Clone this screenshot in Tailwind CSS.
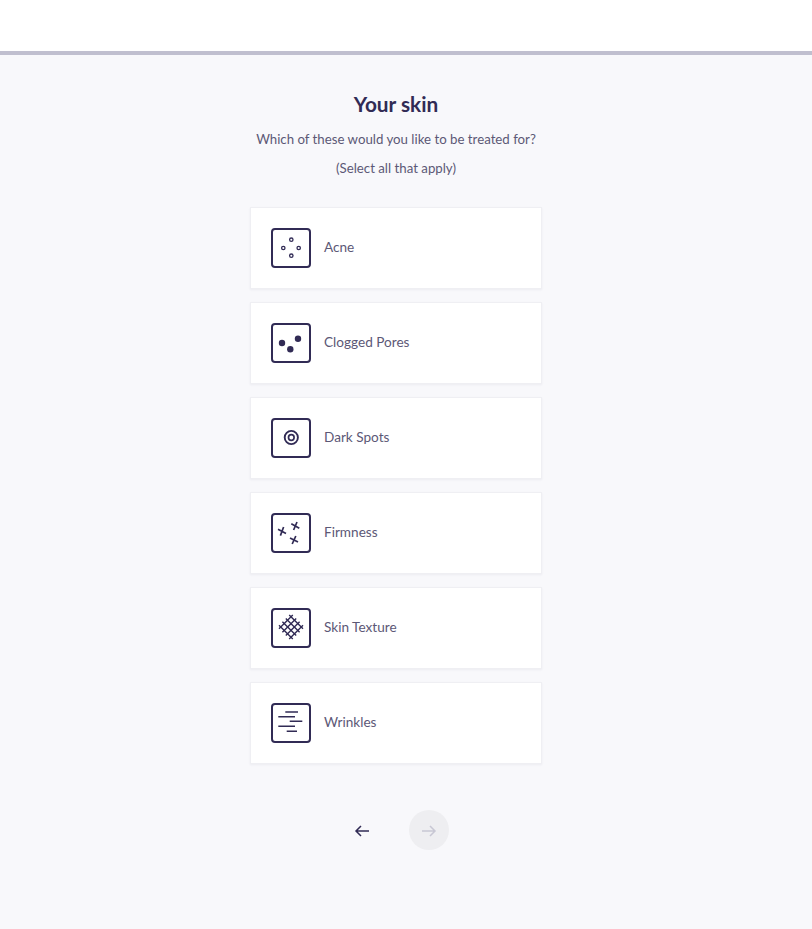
<!doctype html>
<html lang="en">
<head>
<meta charset="utf-8">
<script src="https://cdn.jsdelivr.net/npm/@tailwindcss/browser@4"></script>
<title>Your skin</title>
</head>
<body class="bg-[#f8f8fb] font-['Lato','Liberation_Sans',sans-serif] text-[#312b55]">
<header class="h-[55px] bg-white border-b-4 border-[#c0bfcf]"></header>
<main class="h-[874px] pr-[20px] flex flex-col items-center">
  <h1 class="mt-[36px] h-[26px] leading-[26px] text-[20.8px] font-bold text-[#312b55]">Your skin</h1>
  <p class="mt-[12px] h-[20px] leading-[20px] text-[13.25px] text-[#5c5876]">Which of these would you like to be treated for?</p>
  <p class="mt-[9px] h-[20px] leading-[20px] text-[13.25px] text-[#5c5876]">(Select all that apply)</p>
  <ul class="mt-[29px] w-[292px] flex flex-col gap-[13px]">
    <li class="h-[82px] bg-white border border-[#efeff3] shadow-[0_1px_2px_rgba(49,43,85,0.06)] flex items-center pl-[20px] gap-[13px]">
      <span class="w-[40px] h-[40px] shrink-0 border-2 border-[#312b55] rounded-[4px] block">
        <svg class="-m-[2px]" width="40" height="40" viewBox="0 0 40 40" fill="none" stroke="#312b55" stroke-width="1.3"><circle cx="20.3" cy="11.7" r="1.7"/><circle cx="12.3" cy="20" r="1.7"/><circle cx="27.7" cy="20" r="1.7"/><circle cx="20.3" cy="27.7" r="1.7"/></svg>
      </span>
      <span class="mb-[1px] text-[13.6px] text-[#5c5876]">Acne</span>
    </li>
    <li class="h-[82px] bg-white border border-[#efeff3] shadow-[0_1px_2px_rgba(49,43,85,0.06)] flex items-center pl-[20px] gap-[13px]">
      <span class="w-[40px] h-[40px] shrink-0 border-2 border-[#312b55] rounded-[4px] block">
        <svg class="-m-[2px]" width="40" height="40" viewBox="0 0 40 40" fill="#312b55"><circle cx="11" cy="20" r="3.2"/><circle cx="27" cy="15.7" r="3.2"/><circle cx="19.3" cy="26.3" r="3.2"/></svg>
      </span>
      <span class="mb-[1px] text-[13.6px] text-[#5c5876]">Clogged Pores</span>
    </li>
    <li class="h-[82px] bg-white border border-[#efeff3] shadow-[0_1px_2px_rgba(49,43,85,0.06)] flex items-center pl-[20px] gap-[13px]">
      <span class="w-[40px] h-[40px] shrink-0 border-2 border-[#312b55] rounded-[4px] block">
        <svg class="-m-[2px]" width="40" height="40" viewBox="0 0 40 40" fill="none" stroke="#312b55"><circle cx="20.3" cy="19.5" r="6.6" stroke-width="1.9"/><circle cx="20.3" cy="19.5" r="2.8" stroke-width="1.7"/></svg>
      </span>
      <span class="mb-[1px] text-[13.6px] text-[#5c5876]">Dark Spots</span>
    </li>
    <li class="h-[82px] bg-white border border-[#efeff3] shadow-[0_1px_2px_rgba(49,43,85,0.06)] flex items-center pl-[20px] gap-[13px]">
      <span class="w-[40px] h-[40px] shrink-0 border-2 border-[#312b55] rounded-[4px] block">
        <svg class="-m-[2px]" width="40" height="40" viewBox="0 0 40 40" fill="none" stroke="#312b55" stroke-width="1.7"><path d="M7 16.2 15 20.4M12.6 14 9.4 22.6"/><path d="M20.3 10.8 28.3 15.2M26 9 22.6 17"/><path d="M19 25 27 29M24.8 23 21.2 31"/></svg>
      </span>
      <span class="mb-[1px] text-[13.6px] text-[#5c5876]">Firmness</span>
    </li>
    <li class="h-[82px] bg-white border border-[#efeff3] shadow-[0_1px_2px_rgba(49,43,85,0.06)] flex items-center pl-[20px] gap-[13px]">
      <span class="w-[40px] h-[40px] shrink-0 border-2 border-[#312b55] rounded-[4px] block">
        <svg class="-m-[2px]" width="40" height="40" viewBox="0 0 40 40" fill="none" stroke="#312b55" stroke-width="1.4"><path d="M8 17.2 21.8 31M11.4 13.8 25.2 27.6M14.8 10.4 28.6 24.2M18.2 7 32 20.8"/><path d="M8 20.8 21.8 7M11.4 24.2 25.2 10.4M14.8 27.6 28.6 13.8M18.2 31 32 17.2"/></svg>
      </span>
      <span class="mb-[1px] text-[13.6px] text-[#5c5876]">Skin Texture</span>
    </li>
    <li class="h-[82px] bg-white border border-[#efeff3] shadow-[0_1px_2px_rgba(49,43,85,0.06)] flex items-center pl-[20px] gap-[13px]">
      <span class="w-[40px] h-[40px] shrink-0 border-2 border-[#312b55] rounded-[4px] block">
        <svg class="-m-[2px]" width="40" height="40" viewBox="0 0 40 40" fill="none" stroke="#312b55" stroke-width="1.5"><path d="M14.3 9H27M7.3 13.7H24M18.7 18.3H31.3M7.3 23.3H24M15.7 28.3H26"/></svg>
      </span>
      <span class="mb-[1px] text-[13.6px] text-[#5c5876]">Wrinkles</span>
    </li>
  </ul>
  <nav class="mt-[46px] flex items-center gap-[6px]">
    <button class="w-[40px] h-[40px] mr-[20px] flex items-center justify-center">
      <svg class="mr-[2px] mt-[1px]" width="16" height="14" viewBox="0 0 16 14" fill="none" stroke="#312b55" stroke-width="1.5"><path d="M15 7H2M7 2 2 7l5 5"/></svg>
    </button>
    <button class="w-[40px] h-[40px] rounded-full bg-[#eeeef1] flex items-center justify-center">
      <svg class="mt-[1px]" width="16" height="14" viewBox="0 0 16 14" fill="none" stroke="#c8c7d4" stroke-width="1.5"><path d="M1 7h13M9 2l5 5-5 5"/></svg>
    </button>
  </nav>
</main>
</body>
</html>
